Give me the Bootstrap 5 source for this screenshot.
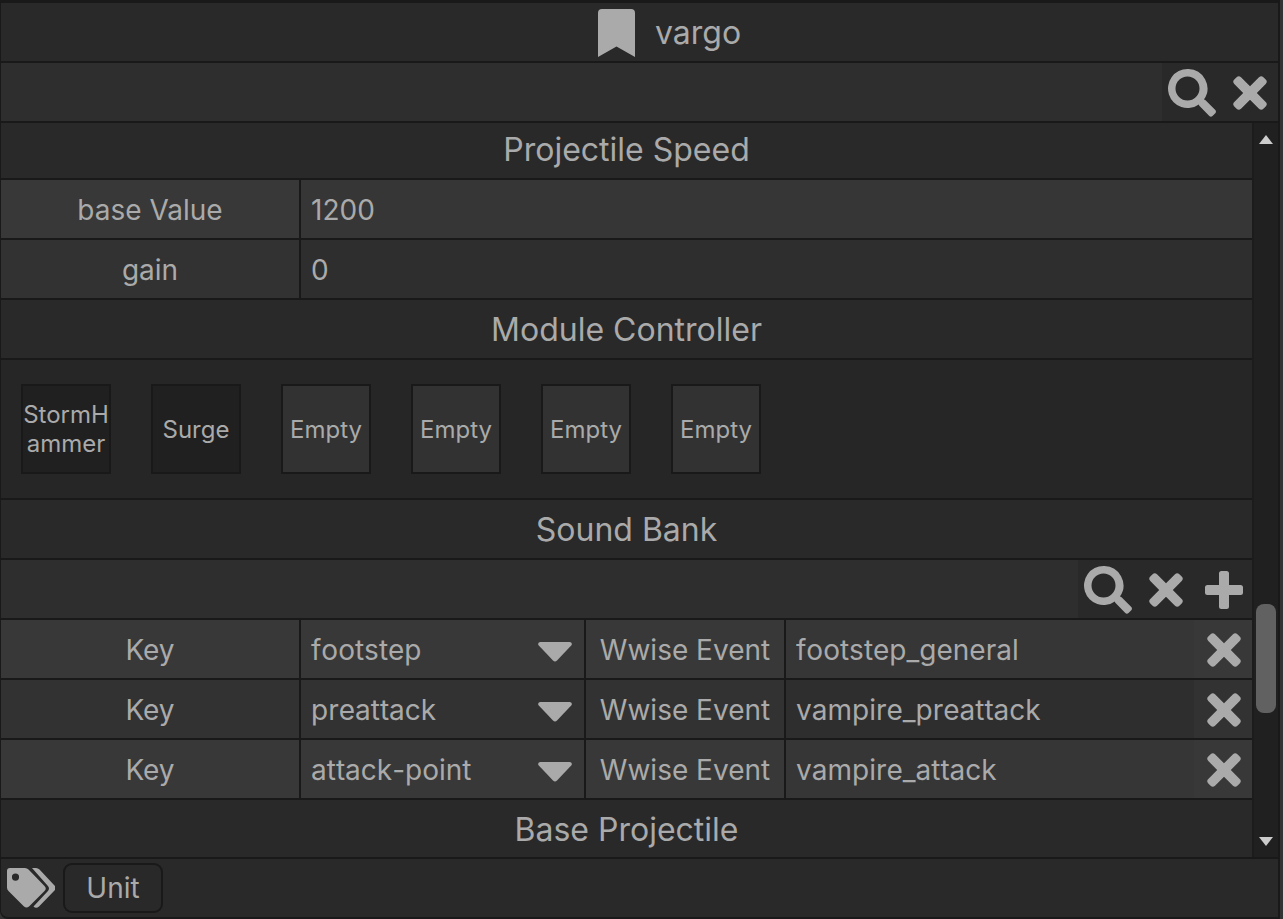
<!DOCTYPE html>
<html lang="en">
<head>
<meta charset="utf-8">
<meta name="viewport" content="width=device-width, initial-scale=1">
<title>vargo</title>
<link href="https://cdn.jsdelivr.net/npm/bootstrap@5.3.0/dist/css/bootstrap.min.css" rel="stylesheet">
<style>
  :root { --line: #191919; --ink: #aaaaaa; --panel: #292929; --row: 58px; }
  body { background: #333; color: var(--ink); font: 400 28px/34px Inter, sans-serif; }
  .editor { background: var(--panel); border: solid var(--line); border-width: 3px 2px 2px 1px; margin-right: 3px; border-bottom-left-radius: 8px; }
  .bar { height: 60px; border-bottom: 2px solid var(--line); }
  .title-bar { padding-top: 2px; }
  .top-bar { padding-left: 60px; }
  .title-text { font-size: 32px; line-height: 38px; font-weight: 400; margin: 0; }
  .first-title { height: 57px; padding-bottom: 3px; }
  .field { background: #2e2e2e; border: 0; border-radius: 0; color: inherit; padding: 2px 10px 0; min-width: 0; outline-offset: -2px; appearance: none; font-kerning: none; }
  .icon-btn { width: var(--row); flex: none; border: 0; border-radius: 0; padding: 2px 0 0 2px; background: var(--panel); color: var(--ink); display: flex; align-items: center; justify-content: center; }
  .icon-btn svg, .picker svg, .mark-icon { fill: currentColor; display: block; }
  .prop-name { width: 300px; flex: none; padding-top: 2px; border-right: 2px solid var(--line); background: #323232; }
  .picker { width: 285px; flex: none; position: relative; border-right: 2px solid var(--line); }
  .picker .field { width: 100%; height: 100%; background: #323232; }
  .picker svg { position: absolute; right: 12px; top: 22px; pointer-events: none; }
  .event-name { width: 200px; flex: none; padding-top: 2px; border-right: 2px solid var(--line); background: #323232; }
  .prop .icon-btn { background: #323232; }
  .lit .prop-name, .lit .picker .field, .lit .event-name, .lit .icon-btn { background: #383838; }
  .lit .field { background: #363636; }
  .modules { background: #262626; border-bottom: 2px solid var(--line); padding: 24px 20px; gap: 40px; }
  .tile { width: 90px; height: 90px; border: 2px solid var(--line); background: #323232; color: inherit; padding: 0; font-size: 24px; line-height: 29px; word-break: break-all; }
  .tile.used { background: #202020; }
  .scroller { width: 26px; flex: none; background: #202020; border-left: 2px solid #1c1c1c; }
  .scroller button { border: 0; background: none; padding: 0; height: 32px; display: flex; align-items: center; justify-content: center; width: 100%; }
  .before { flex: 449 0 0; } .after { flex: 112 0 0; }
  .thumb { flex: 109 0 0; width: 20px; border-radius: 8px; background: #616161; }
  .tag-bar { height: 60px; border-top: 2px solid var(--line); }
  .tag-chip { height: 50px; width: 100px; border: 2px solid var(--line); border-radius: 9px; background: var(--panel); color: inherit; padding: 0; }
</style>
<script src="https://cdn.jsdelivr.net/npm/bootstrap@5.3.0/dist/js/bootstrap.bundle.min.js"></script>
</head>
<body>
<svg class="d-none" aria-hidden="true">
  <symbol id="search" viewBox="0 0 48 48"><path fill-rule="evenodd" d="M19.500 0a19.500 19.500 0 1 0 11.300 35.400c.1.700.5 1.400 1 1.900l9.500 9.800c.9.900 2.300.9 3.200 0l2.800-2.800c.9-.9.900-2.300 0-3.200l-9.500-9.600c-.5-.5-1.200-.8-1.900-.9A19.500 19.500 0 0 0 19.500 0zm0 7.500a12 12 0 1 1 0 24 12 12 0 0 1 0-24z"/></symbol>
  <symbol id="cross" viewBox="0 0 34 34"><path d="M17 10.200 26 1.300q2.200-2.200 4.400 0l2.300 2.300q2.200 2.200 0 4.400L23.800 17l8.900 9q2.200 2.200 0 4.400l-2.300 2.300q-2.200 2.200-4.400 0L17 23.800l-9 8.900q-2.200 2.200-4.400 0l-2.300-2.300q-2.200-2.200 0-4.400l8.900-9-8.900-9q-2.200-2.200 0-4.400l2.300-2.300q2.200-2.200 4.400 0z"/></symbol>
  <symbol id="plus" viewBox="0 0 38 38"><path d="M16.500 0h5q2.500 0 2.500 2.500V14h11.500q2.500 0 2.500 2.500v5q0 2.500-2.500 2.500H24v11.500q0 2.500-2.500 2.500h-5q-2.500 0-2.500-2.500V24H2.500Q0 24 0 21.500v-5Q0 14 2.500 14H14V2.500Q14 0 16.500 0z"/></symbol>
  <symbol id="caret" viewBox="0 0 34 20"><path d="M2 0h30q3 1 1.200 3.600L19 18.500q-2 2-4 0L.8 3.600Q-1 1 2 0z"/></symbol>
</svg>

<main class="editor d-flex flex-column vh-100 overflow-hidden">
  <header class="bar title-bar top-bar flex-shrink-0 d-flex align-items-center justify-content-center">
    <svg class="mark-icon" width="37" height="48" viewBox="0 0 37 48" aria-hidden="true"><path d="M4 0h29q4 0 4 4v44L18.500 37.500 0 48V4q0-4 4-4z"/></svg>
    <h1 class="title-text ms-3 ps-1">vargo</h1>
  </header>
  <div class="bar flex-shrink-0 d-flex">
    <input class="field flex-grow-1" type="text" aria-label="Search properties">
    <button class="icon-btn" type="button" aria-label="Search"><svg width="48" height="48"><use href="#search"/></svg></button>
    <button class="icon-btn" type="button" aria-label="Clear search"><svg width="34" height="34"><use href="#cross"/></svg></button>
  </div>

  <div class="d-flex flex-grow-1 overflow-hidden">
    <div class="flex-grow-1 overflow-hidden">
      <div class="bar title-bar first-title d-flex align-items-center justify-content-center"><h2 class="title-text">Projectile Speed</h2></div>
      <div class="bar prop lit d-flex">
        <label class="prop-name d-flex align-items-center justify-content-center" for="base">base Value</label>
        <input class="field flex-grow-1" id="base" type="text" value="1200">
      </div>
      <div class="bar prop d-flex">
        <label class="prop-name d-flex align-items-center justify-content-center" for="gain">gain</label>
        <input class="field flex-grow-1" id="gain" type="text" value="0">
      </div>

      <div class="bar title-bar d-flex align-items-center justify-content-center"><h2 class="title-text">Module Controller</h2></div>
      <div class="modules d-flex">
        <button class="tile used" type="button">StormHammer</button>
        <button class="tile used" type="button">Surge</button>
        <button class="tile" type="button">Empty</button>
        <button class="tile" type="button">Empty</button>
        <button class="tile" type="button">Empty</button>
        <button class="tile" type="button">Empty</button>
      </div>

      <div class="bar title-bar d-flex align-items-center justify-content-center"><h2 class="title-text">Sound Bank</h2></div>
      <div class="bar d-flex">
        <input class="field flex-grow-1" type="text" aria-label="Search sounds">
        <button class="icon-btn" type="button" aria-label="Search"><svg width="48" height="48"><use href="#search"/></svg></button>
        <button class="icon-btn" type="button" aria-label="Clear search"><svg width="34" height="34"><use href="#cross"/></svg></button>
        <button class="icon-btn" type="button" aria-label="Add sound"><svg width="38" height="38"><use href="#plus"/></svg></button>
      </div>
      <div class="bar prop lit d-flex">
        <label class="prop-name d-flex align-items-center justify-content-center" for="key1">Key</label>
        <div class="picker"><select class="field" id="key1"><option>footstep</option></select><svg width="34" height="20" aria-hidden="true"><use href="#caret"/></svg></div>
        <label class="event-name d-flex align-items-center justify-content-center" for="event1">Wwise Event</label>
        <input class="field flex-grow-1" id="event1" type="text" value="footstep_general">
        <button class="icon-btn" type="button" aria-label="Remove footstep"><svg width="34" height="34"><use href="#cross"/></svg></button>
      </div>
      <div class="bar prop d-flex">
        <label class="prop-name d-flex align-items-center justify-content-center" for="key2">Key</label>
        <div class="picker"><select class="field" id="key2"><option>preattack</option></select><svg width="34" height="20" aria-hidden="true"><use href="#caret"/></svg></div>
        <label class="event-name d-flex align-items-center justify-content-center" for="event2">Wwise Event</label>
        <input class="field flex-grow-1" id="event2" type="text" value="vampire_preattack">
        <button class="icon-btn" type="button" aria-label="Remove preattack"><svg width="34" height="34"><use href="#cross"/></svg></button>
      </div>
      <div class="bar prop lit d-flex">
        <label class="prop-name d-flex align-items-center justify-content-center" for="key3">Key</label>
        <div class="picker"><select class="field" id="key3"><option>attack-point</option></select><svg width="34" height="20" aria-hidden="true"><use href="#caret"/></svg></div>
        <label class="event-name d-flex align-items-center justify-content-center" for="event3">Wwise Event</label>
        <input class="field flex-grow-1" id="event3" type="text" value="vampire_attack">
        <button class="icon-btn" type="button" aria-label="Remove attack-point"><svg width="34" height="34"><use href="#cross"/></svg></button>
      </div>
      <div class="bar border-bottom-0 d-flex align-items-center justify-content-center"><h2 class="title-text">Base Projectile</h2></div>
    </div>
    <div class="scroller d-flex flex-column align-items-center">
      <button type="button" aria-label="Scroll up"><svg width="14" height="9" viewBox="0 0 14 9"><path fill="#ccc" d="M7 0l7 9H0z"/></svg></button>
      <div class="before"></div>
      <div class="thumb"></div>
      <div class="after"></div>
      <button type="button" aria-label="Scroll down"><svg width="14" height="9" viewBox="0 0 14 9"><path fill="#ccc" d="M0 0h14L7 9z"/></svg></button>
    </div>
  </div>

  <footer class="tag-bar flex-shrink-0 d-flex align-items-center">
    <svg class="mark-icon ms-1 me-2" width="50" height="40" viewBox="0 0 50 40" aria-hidden="true"><path fill-rule="evenodd" d="M5 0h15q2 0 3.500 1.500l16 16.500q2.500 2.500 0 5L24 38.500q-2.500 2-5 0L3.500 23Q2 21.500 2 19.500V3q0-3 3-3zm5.500 5.500a3.600 3.600 0 1 0 0 7.200 3.600 3.600 0 0 0 0-7.200z"/><path d="M27 0h4q2 0 3.500 1.500l15 16q2 2.500 0 5L34 38.500q-3 2.500-5.500 0l14-15q3-3 0-6z"/></svg>
    <button class="tag-chip" type="button">Unit</button>
  </footer>
</main>
</body>
</html>
